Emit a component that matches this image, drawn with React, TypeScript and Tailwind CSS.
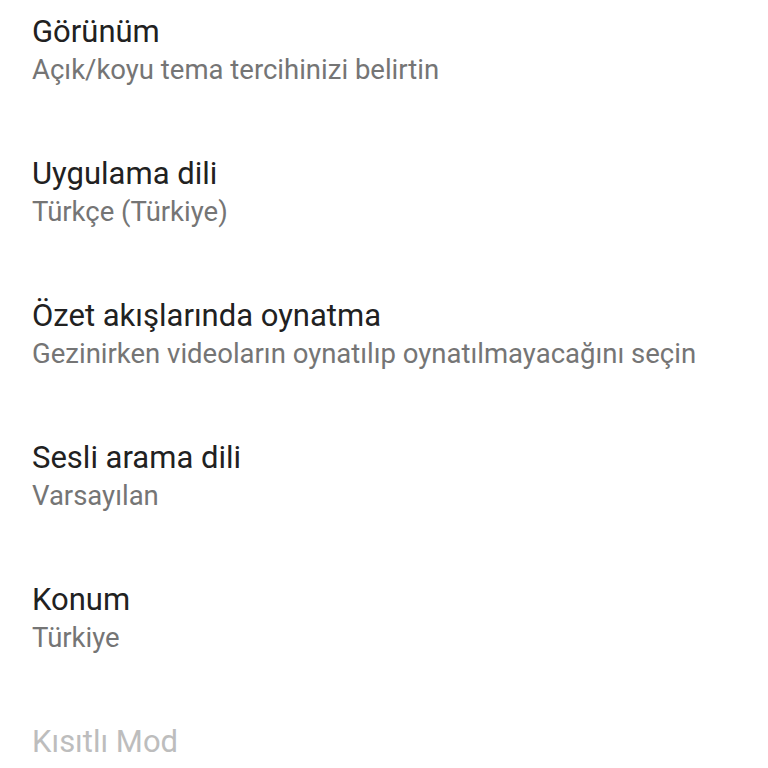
import React from "react";

const items: { title: string; sub?: string; disabled?: boolean }[] = [
  { title: "Görünüm", sub: "Açık/koyu tema tercihinizi belirtin" },
  { title: "Uygulama dili", sub: "Türkçe (Türkiye)" },
  { title: "Özet akışlarında oynatma", sub: "Gezinirken videoların oynatılıp oynatılmayacağını seçin" },
  { title: "Sesli arama dili", sub: "Varsayılan" },
  { title: "Konum", sub: "Türkiye" },
  { title: "Kısıtlı Mod", disabled: true },
];

export default function App() {
  return (
    <div
      className="w-[768px] h-[768px] overflow-hidden bg-white"
      style={{ fontFamily: "Roboto, 'Noto Sans', sans-serif" }}
    >
      {items.map((it) => (
        <div key={it.title} className="h-[142px] pl-[32px] pt-[14px] flex flex-col">
          <div
            className={`text-[31px] leading-[36px] ${it.disabled ? "text-[#bdbdbd]" : "text-[#212121]"}`}
          >
            {it.title}
          </div>
          {it.sub && (
            <div className="mt-[4px] text-[27.5px] leading-[32px] text-[#757575]">{it.sub}</div>
          )}
        </div>
      ))}
    </div>
  );
}
